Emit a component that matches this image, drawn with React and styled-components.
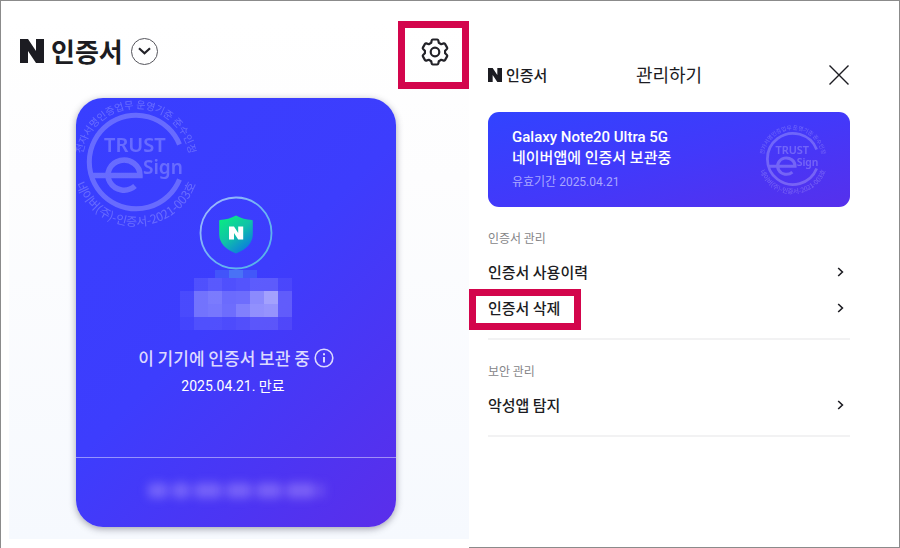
import React from "react";
import styled, { createGlobalStyle } from "styled-components";

const GlobalStyle = createGlobalStyle`
  *, *::before, *::after { box-sizing: border-box; }
  body {
    margin: 0;
    background: #fff;
    color: #1c1c22;
    font-family: Roboto, "Noto Sans CJK KR", sans-serif;
  }
  button {
    margin: 0;
    padding: 0;
    border: 0;
    background: none;
    color: inherit;
    font: inherit;
    cursor: pointer;
  }
  h1, h2, p, ul { margin: 0; padding: 0; }
  svg { display: block; }
`;

const ACCENT = "#d3054c";

const Page = styled.main`
  display: grid;
  grid-template-columns: 468fr 431fr;
  min-height: 100vh;
  border-top: 1px solid #8b8b8b;
  border-left: 1px solid #8b8b8b;
`;

const WalletPanel = styled.section`
  display: flex;
  flex-direction: column;
  margin: 20px 0 9px 8px;
  background: linear-gradient(#fff 0%, #fdfdfe 30%, #f6f9fe 100%);
`;

const WalletHeader = styled.header`
  display: flex;
  align-items: flex-start;
  justify-content: space-between;
`;

const Brand = styled.h1`
  display: flex;
  align-items: center;
  gap: ${(p) => (p.$large ? 7 : 4)}px;
  font-family: "Noto Sans CJK KR", sans-serif;
  font-size: ${(p) => (p.$large ? 26 : 15)}px;
  line-height: ${(p) => (p.$large ? 40 : 24)}px;
  font-weight: ${(p) => (p.$large ? 700 : 500)};
  white-space: nowrap;
`;

const BrandRow = styled.div`
  display: flex;
  align-items: center;
  gap: 8px;
  padding: 10px 0 0 11px;
`;

const RoundButton = styled.button`
  display: grid;
  place-items: center;
  width: 27px;
  height: 27px;
  border: 1px solid #55555c;
  border-radius: 50%;
`;

const SettingsButton = styled.button`
  padding: 10px 13px 16px 16px;
  border: 7px solid ${ACCENT};
`;

const Certificate = styled.article`
  position: relative;
  display: flex;
  flex: 1;
  flex-direction: column;
  margin: 9px 73px 12px 67px;
  border-radius: 27px;
  background: linear-gradient(135deg, #383fff 0%, #3d3dfd 48%, #4c35f3 76%, #5b2eea 100%);
  box-shadow: 0 2px 7px rgba(60, 60, 80, 0.45);
  color: #fff;
`;

const CertificateBody = styled.div`
  display: flex;
  flex: 1;
  flex-direction: column;
  align-items: center;
  padding-top: 98px;
`;

const CornerSeal = styled.div`
  position: absolute;
  top: 0;
  left: 0;
`;

const Mosaic = styled.div`
  display: grid;
  grid-template-columns: repeat(${(p) => p.$columns}, 14px);
  grid-auto-rows: ${(p) => p.$row}px;
`;

const Tile = styled.span`
  background: ${(p) => p.$color};
  opacity: ${(p) => p.$opacity};
`;

const StoredLine = styled.p`
  display: flex;
  align-items: center;
  gap: 4px;
  margin-top: 14px;
  color: #dcd9ff;
  font-family: "Noto Sans CJK KR", sans-serif;
  font-size: 17px;
  font-weight: 500;
  line-height: 28px;
  white-space: nowrap;
`;

const ExpiryLine = styled.p`
  margin-top: 2px;
  padding-right: 6px;
  font-size: 14px;
  line-height: 24px;
`;

const CertificateFooter = styled.footer`
  display: flex;
  align-items: center;
  justify-content: center;
  gap: 4px;
  height: 70px;
  padding-bottom: 4px;
  border-top: 1px solid rgba(255, 255, 255, 0.45);
`;

const Smudge = styled.span`
  width: ${(p) => p.$width}px;
  height: 15px;
  border-radius: 4px;
  background: rgba(180, 160, 255, 0.42);
  filter: blur(5px);
`;

const ManagePanel = styled.section`
  padding: 59px 49px 0 19px;
  border-right: 1px solid #8b8b8b;
  border-bottom: 1px solid #8b8b8b;
`;

const ManageHeader = styled.header`
  display: grid;
  grid-template-columns: 1fr auto 1fr;
  align-items: center;
  height: 30px;
`;

const ManageTitle = styled.h2`
  padding-bottom: 2px;
  font-family: "Noto Sans CJK KR", sans-serif;
  font-size: 18px;
  font-weight: 400;
  line-height: 26px;
`;

const CloseButton = styled.button`
  justify-self: end;
`;

const DeviceCard = styled.article`
  display: flex;
  align-items: center;
  justify-content: space-between;
  margin-top: 22px;
  padding: 12px 22px 12px 24px;
  border-radius: 11px;
  background: linear-gradient(165deg, #3143ff 0%, #4239fa 50%, #5630ec 100%);
  color: #fff;
`;

const DeviceName = styled.p`
  font-size: 15px;
  font-weight: 500;
  line-height: 21px;
  white-space: nowrap;
`;

const Validity = styled.p`
  margin-top: 3px;
  color: #a9a6ff;
  font-size: 12px;
  line-height: 20px;
`;

const Group = styled.section`
  padding: 20px 0 12px;
  border-bottom: 2px solid #f2f2f3;
`;

const GroupTitle = styled.h2`
  margin-bottom: 5px;
  color: #858588;
  font-family: "Noto Sans CJK KR", sans-serif;
  font-size: 12px;
  font-weight: 400;
  line-height: 22px;
`;

const MenuList = styled.ul`
  list-style: none;
`;

const MenuButton = styled.button`
  display: flex;
  align-items: center;
  justify-content: space-between;
  width: 100%;
  height: 36px;
  padding-right: 6px;
  font-family: "Noto Sans CJK KR", sans-serif;
  font-size: 15px;
  font-weight: 500;
  line-height: 24px;
`;

const MenuLabel = styled.span`
  position: relative;
  &::after {
    content: "";
    display: ${(p) => (p.$marked ? "block" : "none")};
    position: absolute;
    inset: -7px -21px -10px -19px;
    border: 7px solid ${ACCENT};
  }
`;

function NLogo({ width, height }) {
  return (
    <svg width={width} height={height} viewBox="0 0 24 24" fill="currentColor" aria-label="N" role="img">
      <path d="M0 0h8l8 12V0h8v24h-8L8 12v12H0z" />
    </svg>
  );
}

function GearIcon() {
  return (
    <svg width="28" height="28" viewBox="0 0 28 28" fill="none" stroke="#222228" strokeWidth="2.2" strokeLinejoin="round" aria-hidden="true">
      <path d="M11.8 1.5h4.4q.9 0 1.1.9l.5 2.4 2.4 1.4 2.5-.8q.8-.2 1.3.5l2.1 3.7q.4.8-.2 1.4l-1.8 1.7v2.6l1.8 1.7q.6.6.2 1.4L24 22.1q-.5.7-1.3.5l-2.5-.8-2.4 1.4-.5 2.4q-.2.9-1.1.9h-4.4q-.9 0-1.1-.9l-.5-2.4-2.4-1.4-2.5.8q-.8.2-1.3-.5l-2.1-3.7q-.4-.8.2-1.4l1.8-1.7v-2.6l-1.8-1.7q-.6-.6-.2-1.4L4 5.9q.5-.7 1.3-.5l2.5.8 2.4-1.4.5-2.4q.2-.9 1.1-.9z" />
      <circle cx="14" cy="14" r="4.3" />
    </svg>
  );
}

function ChevronRight() {
  return (
    <svg width="7" height="10" viewBox="0 0 7 10" fill="none" stroke="#1c1c22" strokeWidth="1.6" aria-hidden="true">
      <path d="M1.2 1 5.4 5 1.2 9" />
    </svg>
  );
}

function TrustSeal({ id, width, height }) {
  return (
    <svg width={width} height={height} viewBox="-60 -64 124 130" overflow="visible" role="img" aria-label="TRUST eSign" opacity="0.23">
      <defs>
        <path id={`${id}-top`} d="M-53 8A53.6 53.6 0 1 1 53 8" />
        <path id={`${id}-bottom`} d="M-64 0A64 64 0 1 0 64 0" />
      </defs>
      <g fill="none" stroke="#fff">
        <path d="M43.5 -17.5A46.8 46.8 0 1 0 43.5 17.5" strokeWidth="5" />
        <path d="M-44 13.5H4A16 15 0 1 0 -1 24" strokeWidth="5.5" />
      </g>
      <g fill="#fff" fontFamily='"Noto Sans", sans-serif' fontWeight="600">
        <text x="-32" y="-10" fontSize="20">TRUST</text>
        <text x="7" y="12" fontSize="19">Sign</text>
      </g>
      <g fill="#fff" fontFamily='"Noto Sans CJK KR", sans-serif' textAnchor="middle">
        <text fontSize="10">
          <textPath href={`#${id}-top`} startOffset="50%">전자서명인증업무 운영기준 준수인정</textPath>
        </text>
        <text fontSize="12">
          <textPath href={`#${id}-bottom`} startOffset="50%">네이버(주)-인증서-2021-003호</textPath>
        </text>
      </g>
    </svg>
  );
}

function ShieldBadge() {
  return (
    <svg width="74" height="74" viewBox="0 0 74 74" aria-hidden="true">
      <defs>
        <linearGradient id="ring" x1="0" y1="0" x2="1" y2="1">
          <stop offset="0" stopColor="#a9b8ff" />
          <stop offset="0.5" stopColor="#6fb4f4" />
          <stop offset="1" stopColor="#4fb2e6" />
        </linearGradient>
        <linearGradient id="shield" x1="0.1" y1="0" x2="0.8" y2="1">
          <stop offset="0" stopColor="#08ee80" />
          <stop offset="0.5" stopColor="#10c2a8" />
          <stop offset="1" stopColor="#0b72e6" />
        </linearGradient>
      </defs>
      <circle cx="37" cy="37" r="35.5" fill="none" stroke="url(#ring)" strokeWidth="1.8" />
      <path d="M37 19.5q7.5 4 16 4.5.8 0 .8 1v13.5Q53.5 51 37 57.5 20.5 51 20.2 38.5V25q0-1 .8-1 8.5-.5 16-4.5z" fill="url(#shield)" />
      <path d="M30 30.5h5l4.200 6.500v-6.500h5V43.500h-5L35 37v6.500h-5z" fill="#fff" />
    </svg>
  );
}

const NAME_TILES = [
  0, 0.1, 0.15, 0.1, 0.12, 0.16, 0.16, 0.06,
  0.07, 0.28, 0.32, 0.24, 0.25, 0.4, 0.52, 0.17,
  0.07, 0.28, 0.3, 0.25, 0.35, 0.43, 0.45, 0.17,
  0.04, 0.1, 0.1, 0.08, 0.1, 0.14, 0.14, 0.07,
];
const TOP_TILES = [0.4, 0.9, 0.45];
const SMUDGES = [20, 18, 28, 26, 26, 30, 4];

function MenuGroup({ title, items }) {
  return (
    <Group>
      <GroupTitle>{title}</GroupTitle>
      <MenuList>
        {items.map((item) => (
          <li key={item.label}>
            <MenuButton type="button">
              <MenuLabel $marked={item.marked}>{item.label}</MenuLabel>
              <ChevronRight />
            </MenuButton>
          </li>
        ))}
      </MenuList>
    </Group>
  );
}

export default function App() {
  return (
    <>
      <GlobalStyle />
      <Page>
        <WalletPanel>
          <WalletHeader>
            <BrandRow>
              <Brand $large>
                <NLogo width={24} height={24} />
                인증서
              </Brand>
              <RoundButton type="button" aria-label="인증서 선택">
                <svg width="13" height="8" viewBox="0 0 13 8" fill="none" stroke="#222228" strokeWidth="2.2" aria-hidden="true">
                  <path d="M1 1.2 6.5 6.2 12 1.2" />
                </svg>
              </RoundButton>
            </BrandRow>
            <SettingsButton type="button" aria-label="설정">
              <GearIcon />
            </SettingsButton>
          </WalletHeader>
          <Certificate>
            <CornerSeal>
              <TrustSeal id="large" width={124} height={130} />
            </CornerSeal>
            <CertificateBody>
              <ShieldBadge />
              <Mosaic $columns={3} $row={8} aria-hidden="true">
                {TOP_TILES.map((o, i) => (
                  <Tile key={i} $color="#4a78f5" $opacity={o} />
                ))}
              </Mosaic>
              <Mosaic $columns={8} $row={13} aria-hidden="true">
                {NAME_TILES.map((o, i) => (
                  <Tile key={i} $color="#fff" $opacity={o} />
                ))}
              </Mosaic>
              <StoredLine>
                이 기기에 인증서 보관 중
                <svg width="20" height="20" viewBox="0 0 20 20" fill="none" stroke="currentColor" strokeWidth="1.6" aria-hidden="true">
                  <circle cx="10" cy="10" r="8.8" />
                  <path d="M10 9v5.5M10 5.2v2" strokeWidth="2" />
                </svg>
              </StoredLine>
              <ExpiryLine>2025.04.21. 만료</ExpiryLine>
            </CertificateBody>
            <CertificateFooter aria-hidden="true">
              {SMUDGES.map((w, i) => (
                <Smudge key={i} $width={w} />
              ))}
            </CertificateFooter>
          </Certificate>
        </WalletPanel>

        <ManagePanel>
          <ManageHeader>
            <Brand as="div">
              <NLogo width={14} height={14} />
              인증서
            </Brand>
            <ManageTitle>관리하기</ManageTitle>
            <CloseButton type="button" aria-label="닫기">
              <svg width="22" height="22" viewBox="0 0 22 22" fill="none" stroke="#1c1c22" strokeWidth="1.4" aria-hidden="true">
                <path d="M1.5 1.5 20.5 20.5M20.5 1.5 1.5 20.5" />
              </svg>
            </CloseButton>
          </ManageHeader>
          <DeviceCard>
            <div>
              <DeviceName>Galaxy Note20 Ultra 5G</DeviceName>
              <DeviceName>네이버앱에 인증서 보관중</DeviceName>
              <Validity>유효기간 2025.04.21</Validity>
            </div>
            <TrustSeal id="small" width={68} height={71} />
          </DeviceCard>
          <MenuGroup
            title="인증서 관리"
            items={[{ label: "인증서 사용이력" }, { label: "인증서 삭제", marked: true }]}
          />
          <MenuGroup title="보안 관리" items={[{ label: "악성앱 탐지" }]} />
        </ManagePanel>
      </Page>
    </>
  );
}
